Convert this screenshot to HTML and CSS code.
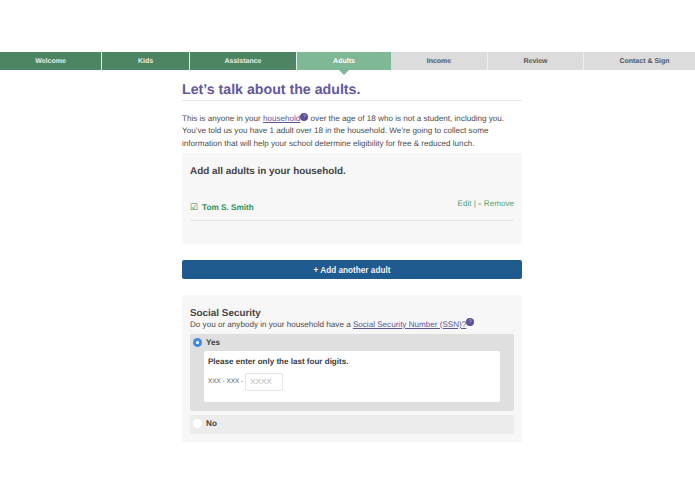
FILE: index.html
```html
<!DOCTYPE html>
<html lang="en">
<head>
<meta charset="utf-8">
<title>Adults</title>
<link rel="stylesheet" href="styles.css">
</head>
<body>
<nav class="tabs">
  <a class="tab done">Welcome</a>
  <a class="tab done">Kids</a>
  <a class="tab done">Assistance</a>
  <a class="tab current">Adults</a>
  <a class="tab todo">Income</a>
  <a class="tab todo">Review</a>
  <a class="tab todo last">Contact &amp; Sign</a>
</nav>
<main class="content">
  <h1 class="title">Let’s talk about the adults.</h1>
  <p class="intro">This is anyone in your <a class="term">household</a><span class="help">?</span> over the age of 18 who is not a student, including you. You’ve told us you have 1 adult over 18 in the household. We’re going to collect some information that will help your school determine eligibility for free &amp; reduced lunch.</p>
  <section class="panel adults">
    <h2 class="panel-title">Add all adults in your household.</h2>
    <div class="adult-row">
      <span class="adult-name"><span class="check">☑</span>Tom S. Smith</span>
      <span class="adult-actions">Edit | <span class="times">×</span> Remove</span>
    </div>
  </section>
  <button class="add-btn">+ Add another adult</button>
  <section class="panel ssn">
    <h2 class="ssn-title">Social Security</h2>
    <p class="ssn-question">Do you or anybody in your household have a <a class="term">Social Security Number (SSN)?</a><span class="help">?</span></p>
    <div class="option selected">
      <div class="option-label"><span class="radio on"></span>Yes</div>
      <div class="digits">
        <div class="digits-title">Please enter only the last four digits.</div>
        <div class="digits-row"><span class="mask">XXX - XXX -</span><input class="digits-input" placeholder="XXXX"></div>
      </div>
    </div>
    <div class="option">
      <div class="option-label"><span class="radio"></span>No</div>
    </div>
  </section>
</main>
</body>
</html>
```
FILE: styles.css
```css
* { box-sizing: border-box; }
html, body { margin: 0; padding: 0; background: #fff; }
body {
  padding-top: 52px;
  font-family: "Liberation Sans", Arial, sans-serif;
  color: #444;
  overflow: hidden;
  height: 494px;
  text-rendering: geometricPrecision;
}
.tabs {
  display: grid;
  grid-template-columns: 102px 88px 107px 94px 97px 96px 111px;
  height: 18px;
}
.tab {
  position: relative;
  display: flex;
  align-items: center;
  justify-content: center;
  font-size: 7px;
  font-weight: bold;
  border-right: 1px solid #e6efe9;
}
.done { background: #4d8562; color: #e8f0ea; }
.current { background: #7fb896; color: #fff; border-right: 0; }
.current::after {
  content: "";
  position: absolute;
  left: 50%;
  top: 100%;
  margin-left: -5px;
  border-style: solid;
  border-width: 5px 5px 0;
  border-color: #7fb896 transparent transparent;
}
.todo { background: #dcdcdc; color: #555; border-right-color: #eee; }
.tab.last { border-right: 0; padding-left: 10px; }
.content { width: 340px; margin: 0 0 0 182px; }
.title {
  margin: 11px 0 0;
  padding-bottom: 1px;
  font-size: 14.2px;
  line-height: 18px;
  color: #63589c;
  border-bottom: 1px solid #e8e8e8;
}
.intro {
  margin: 12px 0 0;
  font-size: 8.1px;
  line-height: 12.3px;
  color: #4a4a4a;
}
.term { color: #5f5597; text-decoration: underline; }
.help {
  display: inline-block;
  width: 8px;
  height: 8px;
  margin-block: -4px;
  border-radius: 50%;
  background: #5b4f96;
  color: #d8d4ea;
  font-size: 5px;
  line-height: 8px;
  text-align: center;
  vertical-align: 3.5px;
}
.panel { background: #f7f7f7; border-radius: 2px; padding: 0 8px; }
.adults { height: 91px; margin-top: 3px; padding-top: 13px; }
.panel-title {
  margin: 0;
  font-size: 9.9px;
  line-height: 12px;
  color: #444;
}
.adult-row {
  display: flex;
  justify-content: space-between;
  margin-top: 19px;
  height: 24px;
  border-bottom: 1px solid #e4e4e4;
}
.adult-name { font-size: 8.2px; font-weight: bold; line-height: 12px; padding-top: 5.5px; color: #2f9158; }
.check { font-family: "DejaVu Sans", sans-serif; font-size: 9px; font-weight: bold; margin-right: 4px; }
.adult-actions { font-size: 8.1px; line-height: 12px; padding-top: 1px; color: #4ba373; }
.times { font-size: 6px; }
.add-btn {
  display: block;
  width: 340px;
  height: 19px;
  margin-top: 16px;
  padding: 2px 0 0;
  border: 0;
  border-radius: 2px;
  background: #1f5b8e;
  color: #f0f4f8;
  font: bold 8.2px "Liberation Sans", Arial, sans-serif;
}
.ssn { margin-top: 16px; height: 147px; padding-top: 13px; }
.ssn-title { margin: 0; font-size: 9.9px; line-height: 12px; color: #444; }
.ssn-question { margin: 0; font-size: 8.1px; line-height: 10px; color: #4a4a4a; }
.option { background: #ececec; border-radius: 2px; height: 19px; margin-top: 4px; }
.option.selected { background: #dfdfdf; height: 77px; margin-top: 4px; }
.option-label {
  display: flex;
  align-items: center;
  height: 17px;
  padding-left: 3px;
  font-size: 8.2px;
  font-weight: bold;
  color: #444;
}
.radio {
  position: relative;
  width: 9px;
  height: 9px;
  margin-right: 4px;
  border-radius: 50%;
  background: #fff;
}
.radio.on { background: #3f8ae0; }
.radio.on::after { content: ""; position: absolute; left: 3px; top: 3px; width: 3px; height: 3px; border-radius: 50%; background: #fff; }
.digits { background: #fff; border-radius: 2px; margin: 0 14px; height: 51px; padding: 5px 4px; }
.digits-title { font-size: 8.05px; font-weight: bold; line-height: 11px; color: #3c3c3c; }
.digits-row { display: flex; align-items: center; margin-top: 6px; }
.mask { font-size: 6.4px; color: #555; margin-right: 2px; }
.digits-input {
  width: 38px;
  height: 18px;
  border: 1px solid #e6e6e6;
  border-radius: 2px;
  padding: 0 4px;
  font: 8.1px "Liberation Sans", Arial, sans-serif;
  background: #fff;
}
.digits-input::placeholder { color: #b5b5b5; opacity: 1; }
```
